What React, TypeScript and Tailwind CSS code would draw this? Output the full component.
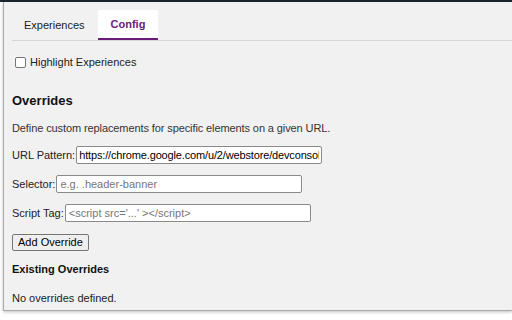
export default function App() {
  return (
    <div className="w-[512px] h-[320px] bg-white overflow-hidden flex flex-col font-['Liberation_Sans',Arial,sans-serif] text-[#222]">
      <div className="h-[2px] bg-[#1b2532] shrink-0" />
      <div className="flex flex-1 items-start">
        <div className="w-[3px] shrink-0" />
        <div className="flex-1 h-[309px] bg-[#f1f1f1] border-l border-b border-[#a9a9a9] shadow-[0_1px_3px_rgba(0,0,0,0.25)] flex flex-col">
          {/* tabs */}
          <div className="mt-2 ml-2 flex border-b border-[#d6d6d6] h-[31px]">
            <div className="pl-3 pr-[13px] h-[30px] flex items-center text-[11px]">Experiences</div>
            <div className="px-[13px] h-[30px] flex items-center text-[11px] font-bold text-[#6a1b7a] bg-white border-b-2 border-[#6a1b7a]">
              Config
            </div>
          </div>

          <div className="pl-2 flex flex-col text-[11px]">
            <label className="mt-[15px] flex items-center h-[12px]">
              <input
                type="checkbox"
                className="appearance-none ml-[3px] w-[11px] h-[11px] border border-[#767676] rounded-[2px] bg-white"
              />
              <span className="ml-[4px]">Highlight Experiences</span>
            </label>

            <h2 className="mt-[25px] text-[13px] leading-[16px] font-bold text-[#111]">Overrides</h2>

            <p className="mt-[12px] leading-[14px] text-[#333] tracking-[-0.1px]">
              Define custom replacements for specific elements on a given URL.
            </p>

            <div className="mt-[11px] flex items-center gap-[1px]">
              <span>URL Pattern:</span>
              <input
                className="w-[246px] h-[18px] px-[2px] bg-white border border-[#8a8a8a] rounded-[2px] text-[11px] tracking-[-0.15px] text-black outline-none"
                defaultValue="https://chrome.google.com/u/2/webstore/devconsole"
              />
            </div>

            <div className="mt-[11px] flex items-center gap-[1px]">
              <span>Selector:</span>
              <input
                className="w-[246px] h-[18px] px-[3px] bg-white border border-[#8a8a8a] rounded-[2px] text-[11px] placeholder:text-[#777] outline-none"
                placeholder="e.g. .header-banner"
              />
            </div>

            <div className="mt-[11px] flex items-center gap-[1px]">
              <span>Script Tag:</span>
              <input
                className="w-[246px] h-[18px] px-[3px] bg-white border border-[#8a8a8a] rounded-[2px] text-[11px] placeholder:text-[#777] outline-none"
                placeholder="<script src='...' ></script>"
              />
            </div>

            <div className="mt-[12px]">
              <button className="h-[17px] px-[5px] bg-[#efefef] border border-[#767676] rounded-[2px] text-[11px] leading-[15px] text-black">
                Add Override
              </button>
            </div>

            <h3 className="mt-[11px] leading-[14px] font-bold text-[#111]">Existing Overrides</h3>

            <p className="mt-[15px] leading-[14px] text-[#222]">No overrides defined.</p>
          </div>
        </div>
      </div>
    </div>
  );
}
